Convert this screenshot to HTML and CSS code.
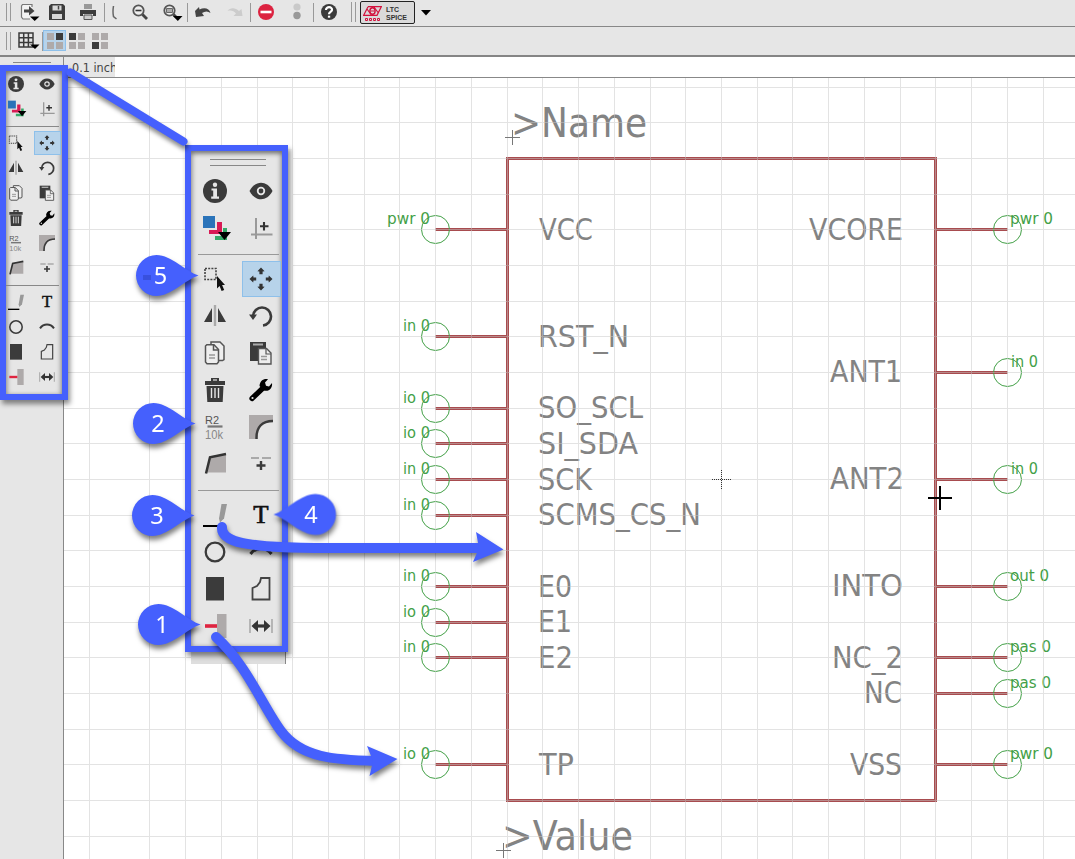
FILE: index.html
```html
<!DOCTYPE html>
<html lang="en">
<head>
<meta charset="utf-8">
<title>Symbol editor</title>
<link rel="stylesheet" href="styles.css">
</head>
<body>
<svg class="defs" width="0" height="0" aria-hidden="true">
  <symbol id="i-info" viewBox="0 0 24 24"><circle cx="12" cy="12" r="12" fill="#3b3b3b"/><circle cx="12" cy="5.8" r="2.2" fill="#e6e6e6"/><path d="M8.500 9.500h5.500v8h2v2.200H8.200v-2.200h2v-6H8.500z" fill="#e6e6e6"/></symbol>
  <symbol id="i-eye" viewBox="0 0 24 24"><path d="M.5 12C6 1 18 1 23.5 12 18 23 6 23 .5 12z" fill="#3b3b3b"/><circle cx="12" cy="12" r="3.3" fill="none" stroke="#e6e6e6" stroke-width="1.8"/></symbol>
  <symbol id="i-layers" viewBox="0 0 29 26"><path d="M0 1h12v12H0z" fill="#2a73b9"/><path d="M14 7h5v12H6v-4h8z" fill="#d81b55"/><path d="M20 13h4v12H12v-4h8z" fill="#35aa69"/><path d="M15 17h13l-6.500 8z" fill="#000"/></symbol>
  <symbol id="i-mark" viewBox="0 0 24 24"><path d="M7 2v21M2 18.500h21.500" stroke="#999" stroke-width="2"/><path d="M15 6v8.500M11 10.200h8.500" stroke="#333" stroke-width="2.100"/></symbol>
  <symbol id="i-group" viewBox="0 0 24 24"><path d="M2 1.500h11v11H2z" fill="none" stroke="#444" stroke-width="1.600" stroke-dasharray="2 1.200"/><path d="M14 9v12.500l2.600-2.500 2 5 2.600-1-2.100-5H22z" fill="#111"/></symbol>
  <symbol id="i-move" viewBox="0 0 24 24"><g fill="#333"><path id="mv" d="M12 .5l3.600 3.700-2 .3v2.700h-3.200V4.500l-2-.3z"/><use href="#mv" transform="rotate(90 12 12)"/><use href="#mv" transform="rotate(180 12 12)"/><use href="#mv" transform="rotate(270 12 12)"/></g></symbol>
  <symbol id="i-mirror" viewBox="0 0 24 24"><path d="M9 4v14H1zM15 4v14h8z" fill="#3b3b3b"/><path d="M12 1v21" stroke="#aaa" stroke-width="2.400"/></symbol>
  <symbol id="i-rotate" viewBox="0 0 24 24"><path d="M4 12A9 9 0 1 1 14 21.500" fill="none" stroke="#3b3b3b" stroke-width="2.600"/><path d="M0 10.500h8L4 16z" fill="#3b3b3b"/></symbol>
  <symbol id="i-copy" viewBox="0 0 24 24"><g fill="#eee" stroke="#555" stroke-width="1.500"><path d="M8 1h9L21 5v13.500l-1.500 1H8z"/><path d="M2.500 5l1.300-1.200H11l4.500 4.700V21l-1.500 1.800H4L2.500 21z"/><path d="M10.500 4v5h5" fill="none"/></g><path d="M6 14h6M6 17h6" stroke="#999" stroke-width="1.500"/></symbol>
  <symbol id="i-paste" viewBox="0 0 24 24"><path d="M1 1h16v19H1z" fill="#3b3b3b"/><path d="M4 3.500h10" stroke="#aaa" stroke-width="2"/><path d="M9.500 7.500h8L22 12v11H9.500z" fill="#eee" stroke="#555" stroke-width="1.400"/><path d="M17 7.500V13h5" fill="none" stroke="#555" stroke-width="1.200"/><path d="M12 15.500h6M12 18.500h6" stroke="#999" stroke-width="1.400"/></symbol>
  <symbol id="i-trash" viewBox="0 0 24 24"><path d="M2 3h6V0h8v3h6v4H2zM3.500 8h17l-.8 16H4.300z" fill="#3b3b3b"/><path d="M8.500 10v10M12 10v10M15.500 10v10" stroke="#e6e6e6" stroke-width="1.400"/><path d="M10 2h4" stroke="#e6e6e6" stroke-width="1.200"/></symbol>
  <symbol id="i-wrench" viewBox="0 0 24 24"><path d="M3 20.500L14 10" stroke="#000" stroke-width="5.200" stroke-linecap="round"/><path d="M10.500 8C11 3 14 .5 19 1.200L16 4.500l1 3.200 3 .8 3-3.500c.8 5-3 9-8 7.500z" fill="#000"/><circle cx="3.500" cy="20" r="1.100" fill="#e6e6e6"/></symbol>
  <symbol id="i-miter" viewBox="0 0 24 24"><path d="M0 0h24v24H0z" fill="#aeaaaa"/><path d="M9 24C8 13 13 7 24 7v17z" fill="#e6e6e6"/><path d="M7.500 24C7 12 13 6 24 6" fill="none" stroke="#3b3b3b" stroke-width="2.400"/></symbol>
  <symbol id="i-split" viewBox="0 0 24 24"><path d="M7 4l16-1v17.500H4z" fill="#aeaaaa"/><path d="M3 21.500L7 5.200 23 2" fill="none" stroke="#333" stroke-width="2.500"/></symbol>
  <symbol id="i-optimize" viewBox="0 0 24 24"><path d="M2 6h8M13 6h9" stroke="#aaa" stroke-width="2.200"/><path d="M12 9v9M7.500 13.500h9" stroke="#3b3b3b" stroke-width="2.400"/></symbol>
  <symbol id="i-line" viewBox="0 0 24 24"><path d="M0 23h17" stroke="#000" stroke-width="2"/><path d="M18.500 1h5.500l-3 14.500-4 4-1-4z" fill="#999"/></symbol>
  <symbol id="i-circle" viewBox="0 0 24 24"><circle cx="12" cy="12" r="9.300" fill="none" stroke="#3b3b3b" stroke-width="2.300"/></symbol>
  <symbol id="i-arc" viewBox="0 0 24 24"><path d="M1.500 14C7 6.500 17 6.500 22.500 14" fill="none" stroke="#3b3b3b" stroke-width="3"/></symbol>
  <symbol id="i-rect" viewBox="0 0 24 24"><path d="M3 0h18v23.500H3z" fill="#3b3b3b"/></symbol>
  <symbol id="i-poly" viewBox="0 0 24 24"><path d="M12 1h8.500v21.500h-17V11L8 9l3-4z" fill="none" stroke="#444" stroke-width="1.800"/></symbol>
  <symbol id="i-pin" viewBox="0 0 24 24"><path d="M14 0h9.500v24H14z" fill="#aeaaaa"/><path d="M2 12h12" stroke="#df2440" stroke-width="3.600"/></symbol>
  <symbol id="i-dim" viewBox="0 0 24 24"><path d="M1 5v14M23 5v14" stroke="#aaa" stroke-width="1.600"/><path d="M5 12h14" stroke="#333" stroke-width="3.200"/><path d="M9 6v12l-6.500-6zM15 6v12l6.500-6z" fill="#333"/></symbol>
  <g id="pin-l"><path d="M0 0H72" class="wire"/><circle r="14" class="pad"/></g>
  <g id="pin-r"><path d="M-71 0H0" class="wire"/><circle r="14" class="pad"/></g>
  <path id="drop" d="M42 0C29-4 15-20.500 0-20.500a20.500 20.500 0 0 0 0 41C15 20.500 29 4 42 0z"/>
</svg>

<div class="app">
  <header class="bar bar-main">
    <span class="handle"></span>
    <svg class="ico export" width="20" height="20" viewBox="0 0 20 20"><path d="M12 5V2.500H2.500L1.500 4v11l1.500 2h7" fill="#f2f2f2" stroke="#777" stroke-width="1.200"/><path d="M4 7.500h5V4l5.500 5L9 13.500V10.500H4z" fill="#444"/><path d="M10 14.500h9.500L14.700 19z"/></svg>
    <svg class="ico save" width="16" height="16" viewBox="0 0 16 16"><path d="M0 2l2-2h12l2 2v14H0z" fill="#3d3d3d"/><path d="M3.500 1.500h9v5h-9zM3 10h10v5H3z" fill="#d8d8d8"/><path d="M9.500 2v3.500" stroke="#444" stroke-width="1.500"/></svg>
    <svg class="ico print" width="16" height="16" viewBox="0 0 16 16"><path d="M4 0h8v5H4z" fill="#999"/><path d="M0 6h16v6h-3v-2H3v2H0z" fill="#3d3d3d"/><path d="M4 11h8v4.500H4z" fill="#ccc" stroke="#555"/></svg>
    <i class="rule"></i>
    <svg class="ico stub" width="6" height="14" viewBox="0 0 6 14"><path d="M1.500 0Q.5 6 1.500 10.500L4.500 13" fill="none" stroke="#666" stroke-width="1.500"/></svg>
    <svg class="ico zoom" width="17" height="17" viewBox="0 0 17 17"><circle cx="6.500" cy="6.500" r="5.200" fill="#eee" stroke="#555" stroke-width="1.800"/><path d="M10.500 10.500l4.500 4.500" stroke="#444" stroke-width="2.800"/><path d="M3.500 6.500h6" stroke="#333" stroke-width="1.600"/></svg>
    <svg class="ico zoomsel" width="20" height="17" viewBox="0 0 20 17"><circle cx="6.500" cy="6.500" r="5.200" fill="#eee" stroke="#555" stroke-width="1.800"/><path d="M10.500 10.500l3 3" stroke="#444" stroke-width="2.800"/><path d="M3.500 4.500h6v4h-6z" fill="#aaa" stroke="#666"/><path d="M10 12h9.500l-4.700 5z"/></svg>
    <i class="rule r2"></i>
    <svg class="ico undo" width="16" height="12" viewBox="0 0 16 12"><path d="M0 4l4-4 .5 2.500C9 0 14.500 1 15.500 6 13 4 10 4 7 6l2 3-8 1z" fill="#444"/></svg>
    <svg class="ico redo" width="16" height="12" viewBox="0 0 16 12"><path d="M15.500 9l-1-7-2.500 2C8 0 3 .5.500 4 4 3 7 4 9 6.500L6.500 9z" fill="#ccc"/></svg>
    <i class="rule r3"></i>
    <svg class="ico stop" width="16" height="16" viewBox="0 0 16 16"><circle cx="8" cy="8" r="8" fill="#dc2340"/><path d="M2.500 8h11" stroke="#fff" stroke-width="2.600"/></svg>
    <svg class="ico dots" width="8" height="17" viewBox="0 0 8 17"><circle cx="4" cy="4" r="3.600" fill="#c9c9c9"/><circle cx="4" cy="12.500" r="3.700" fill="#999"/></svg>
    <i class="rule r4"></i>
    <svg class="ico help" width="16" height="16" viewBox="0 0 16 16"><circle cx="8" cy="8" r="8" fill="#3b3b3b"/><path d="M5 6c0-4 6.500-3.500 6 0-.3 2-3 2-3 4.300" fill="none" stroke="#fff" stroke-width="2.200"/><path d="M6.900 11.700h2.300v2H6.900z" fill="#fff"/></svg>
    <span class="handle h2"></span>
    <span class="spice">
      <svg width="19" height="16" viewBox="0 0 19 16" fill="none" stroke="#d3123d"><path d="M5 .7h13.300L14 9.300H.7L5 .7M4 3l4 5.500M11 1l4 5.500" stroke-width="1.200"/><ellipse cx="9.500" cy="5" rx="2.600" ry="3.300" stroke-width="1.400"/><path d="M7.500 5h4" stroke-width="1"/><path d="M2.500 12.500h2v2h-2zM6.500 12.500h2v2h-2zM10.500 12.500h2v2h-2zM14.500 12.500h2v2h-2z"/></svg>
      <span class="brand"><span>LTC</span><span>SPICE</span></span>
    </span>
    <svg class="ico more" width="10" height="6" viewBox="0 0 10 6"><path d="M0 0h10L5 5.500z"/></svg>
  </header>

  <div class="bar bar-view">
    <span class="handle"></span>
    <svg class="ico grid" width="22" height="18" viewBox="0 0 22 18"><path d="M1 1h14v14H1zM5.700 1v14M10.400 1v14M1 5.700h14M1 10.400h14" fill="none" stroke="#3b3b3b" stroke-width="1.500"/><path d="M12 12.500h9.500L17 17z"/></svg>
    <i class="rule tight"></i>
    <span class="quad on"><b></b><b class="k"></b><b></b><b></b></span>
    <span class="quad"><b class="k"></b><b></b><b></b><b></b></span>
    <span class="quad"><b></b><b></b><b class="k"></b><b></b></span>
  </div>

  <div class="work">
    <aside class="side"><span class="grip"></span></aside>
    <main class="main">
      <div class="cmd"><span class="unit">0.1 inch</span></div>
      <svg class="sheet" width="1011" height="781" viewBox="64 78 1011 781">
        <g class="frame"><path d="M507.500 158.500H935.500V800.500H507.500z"/></g>
        <use href="#pin-l" x="435.500" y="229.500"/><use href="#pin-l" x="435.500" y="336.500"/><use href="#pin-l" x="435.500" y="408.500"/><use href="#pin-l" x="435.500" y="443.500"/><use href="#pin-l" x="435.500" y="479.500"/><use href="#pin-l" x="435.500" y="515.500"/><use href="#pin-l" x="435.500" y="586.500"/><use href="#pin-l" x="435.500" y="622.500"/><use href="#pin-l" x="435.500" y="657.500"/><use href="#pin-l" x="435.500" y="764.500"/>
        <use href="#pin-r" x="1007.500" y="229.500"/><use href="#pin-r" x="1007.500" y="372.500"/><use href="#pin-r" x="1007.500" y="479.500"/><use href="#pin-r" x="1007.500" y="586.500"/><use href="#pin-r" x="1007.500" y="657.500"/><use href="#pin-r" x="1007.500" y="693.500"/><use href="#pin-r" x="1007.500" y="764.500"/>
        <g class="kind end">
          <text x="430" y="224" textLength="43" lengthAdjust="spacingAndGlyphs">pwr 0</text><text x="430" y="331" textLength="27" lengthAdjust="spacingAndGlyphs">in 0</text><text x="430" y="403" textLength="27" lengthAdjust="spacingAndGlyphs">io 0</text><text x="430" y="438" textLength="27" lengthAdjust="spacingAndGlyphs">io 0</text><text x="430" y="474" textLength="27" lengthAdjust="spacingAndGlyphs">in 0</text><text x="430" y="510" textLength="27" lengthAdjust="spacingAndGlyphs">in 0</text><text x="430" y="581" textLength="27" lengthAdjust="spacingAndGlyphs">in 0</text><text x="430" y="617" textLength="27" lengthAdjust="spacingAndGlyphs">io 0</text><text x="430" y="652" textLength="27" lengthAdjust="spacingAndGlyphs">in 0</text><text x="430" y="759" textLength="27" lengthAdjust="spacingAndGlyphs">io 0</text>
        </g>
        <g class="kind">
          <text x="1010" y="224" textLength="43" lengthAdjust="spacingAndGlyphs">pwr 0</text><text x="1011" y="367" textLength="27" lengthAdjust="spacingAndGlyphs">in 0</text><text x="1011" y="474" textLength="27" lengthAdjust="spacingAndGlyphs">in 0</text><text x="1010" y="581" textLength="39" lengthAdjust="spacingAndGlyphs">out 0</text><text x="1010" y="652" textLength="41" lengthAdjust="spacingAndGlyphs">pas 0</text><text x="1010" y="688" textLength="41" lengthAdjust="spacingAndGlyphs">pas 0</text><text x="1010" y="759" textLength="43" lengthAdjust="spacingAndGlyphs">pwr 0</text>
        </g>
        <g class="name">
          <text x="539" y="240" textLength="54" lengthAdjust="spacingAndGlyphs">VCC</text><text x="538" y="347" textLength="91" lengthAdjust="spacingAndGlyphs">RST_N</text><text x="538" y="418" textLength="105" lengthAdjust="spacingAndGlyphs">SO_SCL</text><text x="538" y="454" textLength="100" lengthAdjust="spacingAndGlyphs">SI_SDA</text><text x="538" y="490" textLength="54" lengthAdjust="spacingAndGlyphs">SCK</text><text x="538" y="525" textLength="163" lengthAdjust="spacingAndGlyphs">SCMS_CS_N</text><text x="538" y="597" textLength="34" lengthAdjust="spacingAndGlyphs">E0</text><text x="538" y="632" textLength="34" lengthAdjust="spacingAndGlyphs">E1</text><text x="538" y="668" textLength="35" lengthAdjust="spacingAndGlyphs">E2</text><text x="539" y="775" textLength="35" lengthAdjust="spacingAndGlyphs">TP</text>
        </g>
        <g class="name end">
          <text x="903" y="240" textLength="94" lengthAdjust="spacingAndGlyphs">VCORE</text><text x="902" y="382" textLength="72" lengthAdjust="spacingAndGlyphs">ANT1</text><text x="904" y="489" textLength="74" lengthAdjust="spacingAndGlyphs">ANT2</text><text x="903" y="596" textLength="71" lengthAdjust="spacingAndGlyphs">INTO</text><text x="903" y="668" textLength="71" lengthAdjust="spacingAndGlyphs">NC_2</text><text x="902" y="703" textLength="38" lengthAdjust="spacingAndGlyphs">NC</text><text x="902" y="775" textLength="52" lengthAdjust="spacingAndGlyphs">VSS</text>
        </g>
        <g class="big"><text x="511" y="137" textLength="136" lengthAdjust="spacingAndGlyphs">&gt;Name</text><text x="502" y="850" textLength="131" lengthAdjust="spacingAndGlyphs">&gt;Value</text></g>
        <path class="lines" d="M89.500 78V859M149.500 78V859M185.500 78V859M221.500 78V859M257.500 78V859M292.500 78V859M328.500 78V859M364.500 78V859M399.500 78V859M435.500 78V859M471.500 78V859M507.500 78V859M542.500 78V859M578.500 78V859M614.500 78V859M650.500 78V859M685.500 78V859M721.500 78V859M757.500 78V859M792.500 78V859M828.500 78V859M864.500 78V859M900.500 78V859M935.500 78V859M971.500 78V859M1007.500 78V859M1043.500 78V859M64 87.500H1075M64 122.500H1075M64 158.500H1075M64 194.500H1075M64 229.500H1075M64 265.500H1075M64 301.500H1075M64 336.500H1075M64 372.500H1075M64 408.500H1075M64 443.500H1075M64 479.500H1075M64 515.500H1075M64 550.500H1075M64 586.500H1075M64 622.500H1075M64 657.500H1075M64 693.500H1075M64 729.500H1075M64 764.500H1075M64 800.500H1075M64 836.500H1075"/>
        <path class="anchor" d="M505 137.500h15M512.500 130v15M496 850.500h15M503.500 843v15"/>
        <path class="origin" d="M712 479.500h19M721.500 470v19"/>
        <path class="cursor" d="M928 498h24M940 486v24"/>
      </svg>
    </main>
  </div>

  <section class="tools small">
    <div class="set"><svg><use href="#i-info"/></svg><svg><use href="#i-eye"/></svg><svg class="wide"><use href="#i-layers"/></svg><svg><use href="#i-mark"/></svg></div>
    <div class="set mid"><svg><use href="#i-group"/></svg><span class="active"><svg><use href="#i-move"/></svg></span><svg><use href="#i-mirror"/></svg><svg><use href="#i-rotate"/></svg><svg><use href="#i-copy"/></svg><svg><use href="#i-paste"/></svg><svg><use href="#i-trash"/></svg><svg><use href="#i-wrench"/></svg><svg viewBox="0 0 24 24"><text x="2" y="8.500" class="glyph g-r2" textLength="14" lengthAdjust="spacingAndGlyphs">R2</text><path d="M4.500 11.500h15" stroke="#777" stroke-width="2.200"/><text x="2" y="23.500" class="glyph g-10k" textLength="18" lengthAdjust="spacingAndGlyphs">10k</text></svg><svg><use href="#i-miter"/></svg><svg><use href="#i-split"/></svg><svg><use href="#i-optimize"/></svg></div>
    <div class="set last"><svg><use href="#i-line"/></svg><svg viewBox="0 0 24 24"><text x="12" y="20" text-anchor="middle" class="glyph g-t">T</text></svg><svg><use href="#i-circle"/></svg><svg><use href="#i-arc"/></svg><svg><use href="#i-rect"/></svg><svg><use href="#i-poly"/></svg><svg><use href="#i-pin"/></svg><svg><use href="#i-dim"/></svg></div>
  </section>

  <div class="under"></div>
  <section class="tools large">
    <span class="grips"></span>
    <div class="set"><svg><use href="#i-info"/></svg><svg><use href="#i-eye"/></svg><svg class="wide"><use href="#i-layers"/></svg><svg><use href="#i-mark"/></svg></div>
    <div class="set mid"><svg><use href="#i-group"/></svg><span class="active"><svg><use href="#i-move"/></svg></span><svg><use href="#i-mirror"/></svg><svg><use href="#i-rotate"/></svg><svg><use href="#i-copy"/></svg><svg><use href="#i-paste"/></svg><svg><use href="#i-trash"/></svg><svg><use href="#i-wrench"/></svg><svg viewBox="0 0 24 24"><text x="2" y="8.500" class="glyph g-r2" textLength="14" lengthAdjust="spacingAndGlyphs">R2</text><path d="M4.500 11.500h15" stroke="#777" stroke-width="2.200"/><text x="2" y="23.500" class="glyph g-10k" textLength="18" lengthAdjust="spacingAndGlyphs">10k</text></svg><svg><use href="#i-miter"/></svg><svg><use href="#i-split"/></svg><svg><use href="#i-optimize"/></svg></div>
    <div class="set last"><svg><use href="#i-line"/></svg><svg viewBox="0 0 24 24"><text x="12" y="20" text-anchor="middle" class="glyph g-t">T</text></svg><svg><use href="#i-circle"/></svg><svg><use href="#i-arc"/></svg><svg><use href="#i-rect"/></svg><svg><use href="#i-poly"/></svg><svg><use href="#i-pin"/></svg><svg><use href="#i-dim"/></svg></div>
  </section>

  <svg class="notes" width="1075" height="859" viewBox="0 0 1075 859">
    <path class="stroke lead" d="M70.500 72.500L183.500 141.500"/>
    <g class="cast"><path class="stroke" d="M222 527C221 542 243 548 330 548H482"/><path class="solid" d="M476 532L503.500 549.500 473 562 479 548z"/></g>
    <g class="cast"><path class="stroke" d="M216 637C247 665 263 707 281 731 301 758 335 760 376 761"/><path class="solid" d="M367 746L397.500 759 369.500 776 373 761z"/></g>
    <g class="cast solid">
      <use href="#drop" x="156.500" y="275.500"/><use href="#drop" x="153.500" y="423.500"/><use href="#drop" x="152.500" y="515.500"/><use href="#drop" x="158.500" y="624.500"/><use href="#drop" transform="translate(315.500 514.500) scale(-1 1)"/>
    </g>
    <path d="M143 275h8v5h-8z" fill="#3850dd"/>
    <g class="num"><text x="160.500" y="284">5</text><text x="158" y="432">2</text><text x="157" y="524">3</text><text x="162" y="633">1</text><text x="311" y="523">4</text></g>
  </svg>
</div>
</body>
</html>
```
FILE: styles.css
```css
* { box-sizing: border-box; }
body { margin: 0; background: #e6e6e6; font-family: "DejaVu Sans Condensed", "DejaVu Sans", sans-serif; overflow: hidden; }
svg { display: block; flex: none; }
.defs { position: absolute; }
.app { position: relative; width: 1075px; height: 859px; display: flex; flex-direction: column; overflow: hidden; }

/* toolbars */
.bar { display: flex; align-items: flex-start; background: #e6e6e6; flex: none; }
.bar-main { height: 27px; border-bottom: 1px solid #888; }
.bar-view { height: 30px; border-bottom: 2px solid #858585; }
.handle { width: 5px; height: 18px; margin: 3px 0 0 6px; border: solid #999; border-width: 0 1px; flex: none; }
.rule { width: 1px; height: 19px; margin: 3px 0 0 8px; background: #999; flex: none; }
.export { margin: 2px 0 0 9px; }
.save { margin: 4px 0 0 9px; }
.print { margin: 4px 0 0 15px; }
.stub { margin: 6px 0 0 7px; }
.zoom { margin: 4px 0 0 14px; }
.zoomsel { margin: 4px 0 0 14px; }
.r2 { margin-left: 4px; }
.undo { margin: 7px 0 0 7px; }
.redo { margin: 7px 0 0 16px; }
.r3 { margin-left: 7px; }
.stop { margin: 4px 0 0 7px; }
.dots { margin: 3px 0 0 19px; }
.r4 { margin-left: 12px; }
.help { margin: 4px 0 0 7px; }
.h2 { margin: 2px 0 0 14px; height: 20px; }
.spice { display: flex; gap: 3px; width: 55px; height: 23px; margin: 1px 0 0 4px; padding: 4px 2px; border: 1px solid #222; border-radius: 2px; background: #dadada; }
.brand { display: flex; flex-direction: column; color: #333; font: bold 7px/7.5px "Liberation Sans", Arial, sans-serif; padding: 0 0 0 1px; }
.more { margin: 10px 0 0 6px; }
.bar-view .handle { margin-top: 5px; }
.grid { margin: 5px 0 0 7px; }
.tight { margin: 5px 0 0 2px; }
.quad { display: grid; grid-template: 7px 7px / 7px 7px; gap: 2px; width: 23px; height: 21px; padding: 3px; margin-top: 3px; align-content: start; }
.quad.on { background: #b7d3ea; outline: 1px solid #8ec0ea; outline-offset: -1px; padding-left: 4px; }
.quad b { background: #aeaaaa; }
.quad .k { background: #3b3b3b; }

/* work area */
.work { display: flex; flex: 1; }
.side { width: 64px; border-right: 1px solid #888; padding: 5px 0 0 13px; }
.grip { display: block; width: 38px; height: 1px; background: #888; }
.main { width: 1011px; background: #fff; }
.cmd { height: 21px; border-bottom: 1px solid #888; }
.unit { display: block; width: 51px; height: 20px; padding: 3px 0 0 8px; overflow: hidden; white-space: nowrap; background: #e6e6e6; color: #444; font-size: 12.5px; line-height: 15px; }

/* symbol drawing */
.wire, .frame path { fill: none; stroke: #a84c4f; stroke-width: 3; }
.pad { fill: none; stroke: #43a047; stroke-width: 1; }
.kind { fill: #43a047; font-size: 16px; }
.name { fill: #838383; font-size: 30px; }
.big { fill: #838383; font-size: 41px; }
.end { text-anchor: end; }
.lines { fill: none; stroke: rgba(200, 200, 200, .5); shape-rendering: crispEdges; }
.anchor { stroke: #777; }
.origin { stroke: #333; stroke-dasharray: 1 1; }
.cursor { stroke: #000; stroke-width: 2; }

/* tool palettes */
.tools { position: absolute; display: flex; flex-direction: column; border: 6px solid #4560fd; background: #e6e6e6; box-shadow: 2px 4px 5px rgba(0, 0, 0, .45), inset 0 3px 4px rgba(0, 0, 0, .4), inset -3px 0 4px rgba(0, 0, 0, .12), inset 3px 0 4px rgba(0, 0, 0, .12); }
.set { display: grid; justify-items: center; align-items: center; }
.set svg { width: 24px; height: 24px; overflow: visible; }
.active { display: flex; align-items: center; justify-content: center; background: #b7d3ea; border: 1px solid #8ec0ea; }
.small { left: 0; top: 65px; width: 68px; height: 335px; }
.small .set { grid-template-columns: 31px 31px; grid-auto-rows: 25px; margin-left: -6px; }
.small .set svg { width: 16px; height: 16px; }
.small .set .wide { width: 19px; height: 17px; margin-left: 4px; }
.small .mid { margin-top: 5px; padding-top: 3px; }
.small .last { padding-top: 3px; margin-top: 5px; }
.small .mid, .small .last { border-top: 1px solid #888; margin-left: 0; margin-right: 3px; grid-template-columns: 20px 42px; }
.small .active { width: 27px; height: 24px; }
.large { left: 185px; top: 145px; width: 103px; height: 507px; }
.grips { height: 7px; width: 56px; margin: 8px 0 0 19px; border: solid #888; border-width: 1px 0; }
.large .set { grid-template-columns: 46px 46px; grid-auto-rows: 37px; margin: 0 5px 0 1px; }
.large .set:nth-of-type(1) { margin-top: 6px; }
.large .set .wide { width: 29px; height: 26px; margin-left: 5px; }
.large .mid, .large .last { border-top: 1px solid #999; margin: 8px 3px 0 7px; padding-top: 5px; grid-template-columns: 33px 46px; column-gap: 7px; }
.large .active { width: 39px; height: 36px; }
.under { position: absolute; left: 191px; top: 149px; width: 101px; height: 515px; background: linear-gradient(90deg, #dedede 94px, #888 94px, #888 95px, #f4f4f4 95px); clip-path: polygon(0 0, 100% 0, 100% 505px, 95px 505px, 95px 100%, 0 100%); }

/* annotations */
.notes { position: absolute; left: 0; top: 0; }
.stroke { fill: none; stroke: #4560fd; stroke-width: 10; stroke-linecap: round; }
.lead { stroke-width: 8; filter: drop-shadow(1px 4px 2px rgba(0, 0, 0, .45)); }
.solid { fill: #4560fd; }
.cast { filter: drop-shadow(1px 4px 2.500px rgba(0, 0, 0, .5)); }
.num { fill: #fff; font: 23.500px "Noto Sans", sans-serif; text-anchor: middle; }

/* lettering inside icons */
.glyph { font-family: "Liberation Sans", Arial, sans-serif; }
.g-r2 { font-size: 11.500px; fill: #555; }
.g-10k { font-size: 12px; fill: #888; }
.g-t { font: 25px "Liberation Serif", serif; fill: #111; stroke: #111; stroke-width: .7px; }
```
